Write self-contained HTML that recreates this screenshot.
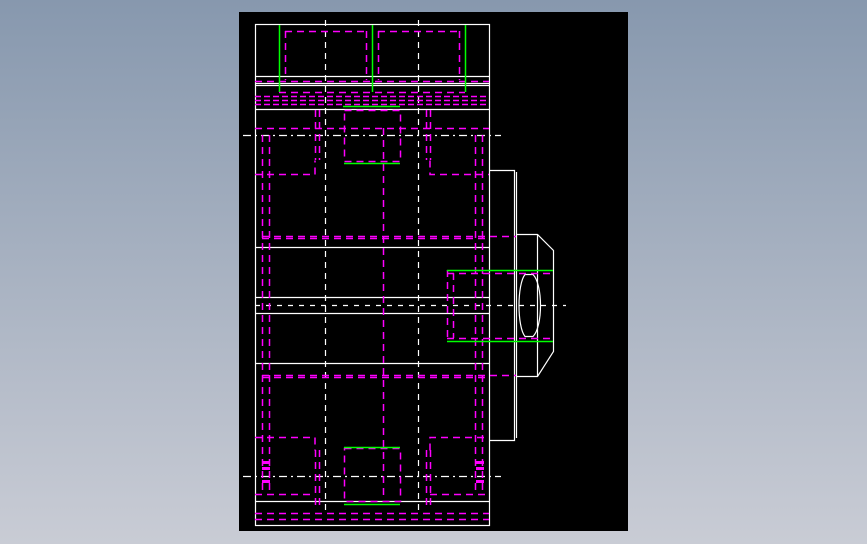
<!DOCTYPE html>
<html><head><style>
html,body{margin:0;padding:0;width:867px;height:544px;overflow:hidden;background:linear-gradient(#8798ae,#c9ccd5);}
svg{position:absolute;left:0;top:0}
</style></head><body>
<svg width="867" height="544" viewBox="0 0 867 544">
<rect x="239" y="12" width="389" height="519" fill="#000"/>
<g fill="none" stroke="#fff" stroke-width="1.2">
<rect x="255.5" y="24.5" width="234" height="501"/>
<line x1="255" y1="76.5" x2="489" y2="76.5"/>
<line x1="255" y1="83.5" x2="489" y2="83.5"/>
<line x1="255" y1="85.5" x2="489" y2="85.5"/>
<line x1="255" y1="109.5" x2="489" y2="109.5"/>
<line x1="255" y1="247.5" x2="489" y2="247.5"/>
<line x1="255" y1="297.5" x2="489" y2="297.5"/>
<line x1="255" y1="313.5" x2="489" y2="313.5"/>
<line x1="255" y1="363.5" x2="489" y2="363.5"/>
<line x1="255" y1="501.5" x2="489" y2="501.5"/>
<path d="M489 170.5H514.5V440.5H489"/>
<line x1="516.5" y1="172" x2="516.5" y2="438"/>
<path d="M517 234.5H537.5L553.5 250.5V351.5L537.5 376.5H517"/>
<line x1="537.5" y1="234" x2="537.5" y2="376"/>
<path d="M525 274.5h8c10 10 10 52 0 62h-8c-8-10-8-52 0-62z"/>
</g>
<g fill="none" stroke="#fff" stroke-width="1.2" stroke-dasharray="6,5">
<line x1="325.5" y1="20" x2="325.5" y2="515"/>
<line x1="418.5" y1="20" x2="418.5" y2="515"/>
<line x1="243" y1="135.5" x2="501" y2="135.5" stroke-dasharray="8,4,2,4"/>
<line x1="243" y1="476.5" x2="501" y2="476.5" stroke-dasharray="8,4,2,4"/>
<line x1="255" y1="305.5" x2="566" y2="305.5" stroke-dasharray="5,6"/>
</g>
<g fill="none" stroke="#f0f" stroke-width="1.5" stroke-dasharray="7,5">
<path d="M285 31.5H366M378 31.5H459"/>
<line x1="285.5" y1="31" x2="285.5" y2="80"/>
<line x1="366.5" y1="31" x2="366.5" y2="80"/>
<line x1="378.5" y1="31" x2="378.5" y2="80"/>
<line x1="459.5" y1="31" x2="459.5" y2="80"/>
<line x1="255" y1="81.5" x2="489" y2="81.5"/>
<line x1="279" y1="92.5" x2="465" y2="92.5"/>
<line x1="255" y1="96.5" x2="489" y2="96.5" stroke-dasharray="6,3"/>
<line x1="255" y1="100.5" x2="489" y2="100.5" stroke-dasharray="6,3"/>
<line x1="255" y1="104.5" x2="489" y2="104.5" stroke-dasharray="6,3"/>
<line x1="255" y1="128.5" x2="489" y2="128.5"/>
<line x1="262" y1="236.5" x2="516" y2="236.5"/>
<line x1="262" y1="238.5" x2="489" y2="238.5"/>
<line x1="262" y1="375.5" x2="516" y2="375.5"/>
<line x1="262" y1="377.5" x2="489" y2="377.5"/>
<line x1="262.5" y1="135" x2="262.5" y2="495"/>
<line x1="269.5" y1="135" x2="269.5" y2="495"/>
<line x1="475.5" y1="135" x2="475.5" y2="495"/>
<line x1="482.5" y1="135" x2="482.5" y2="495"/>
<line x1="383.5" y1="128" x2="383.5" y2="495"/>
<line x1="315.5" y1="110" x2="315.5" y2="160"/>
<line x1="319.5" y1="110" x2="319.5" y2="160"/>
<line x1="426.5" y1="110" x2="426.5" y2="160"/>
<line x1="430.5" y1="110" x2="430.5" y2="160"/>
<line x1="315.5" y1="450" x2="315.5" y2="505"/>
<line x1="319.5" y1="450" x2="319.5" y2="505"/>
<line x1="426.5" y1="450" x2="426.5" y2="505"/>
<line x1="430.5" y1="450" x2="430.5" y2="505"/>
<rect x="344.5" y="110.5" width="56" height="51"/>
<rect x="344.5" y="448.5" width="56" height="53"/>
<path d="M255 174.5H315V160.5M430 160.5V174.5H489"/>
<path d="M255 437.5H315V450.5M430 450.5V437.5H489"/>
<path d="M255 494.5H315M430 494.5H489"/>
<path d="M255 513.5H489"/>
<path d="M255 519.5H489"/>
<path d="M447 273.5H553M447 338.5H553"/>
<line x1="447.5" y1="270" x2="447.5" y2="341"/>
<line x1="453.5" y1="273" x2="453.5" y2="338"/>
</g>
<g fill="none" stroke="#0f0" stroke-width="1.5">
<line x1="279.5" y1="25" x2="279.5" y2="92"/>
<line x1="372.5" y1="25" x2="372.5" y2="92"/>
<line x1="465.5" y1="25" x2="465.5" y2="92"/>
<line x1="343" y1="106.5" x2="400" y2="106.5"/>
<line x1="344" y1="163.5" x2="400" y2="163.5"/>
<line x1="344" y1="447.5" x2="400" y2="447.5"/>
<line x1="344" y1="504.5" x2="400" y2="504.5"/>
<line x1="447" y1="270.5" x2="553" y2="270.5"/>
<line x1="447" y1="341.5" x2="553" y2="341.5"/>
</g>
<g fill="#f0f">
<rect x="262" y="461" width="8" height="3"/><rect x="262" y="467" width="8" height="3"/>
<rect x="476" y="461" width="8" height="3"/><rect x="476" y="467" width="8" height="3"/>
<rect x="262" y="480" width="8" height="3"/><rect x="476" y="480" width="8" height="3"/>
</g>
</svg>
</body></html>
